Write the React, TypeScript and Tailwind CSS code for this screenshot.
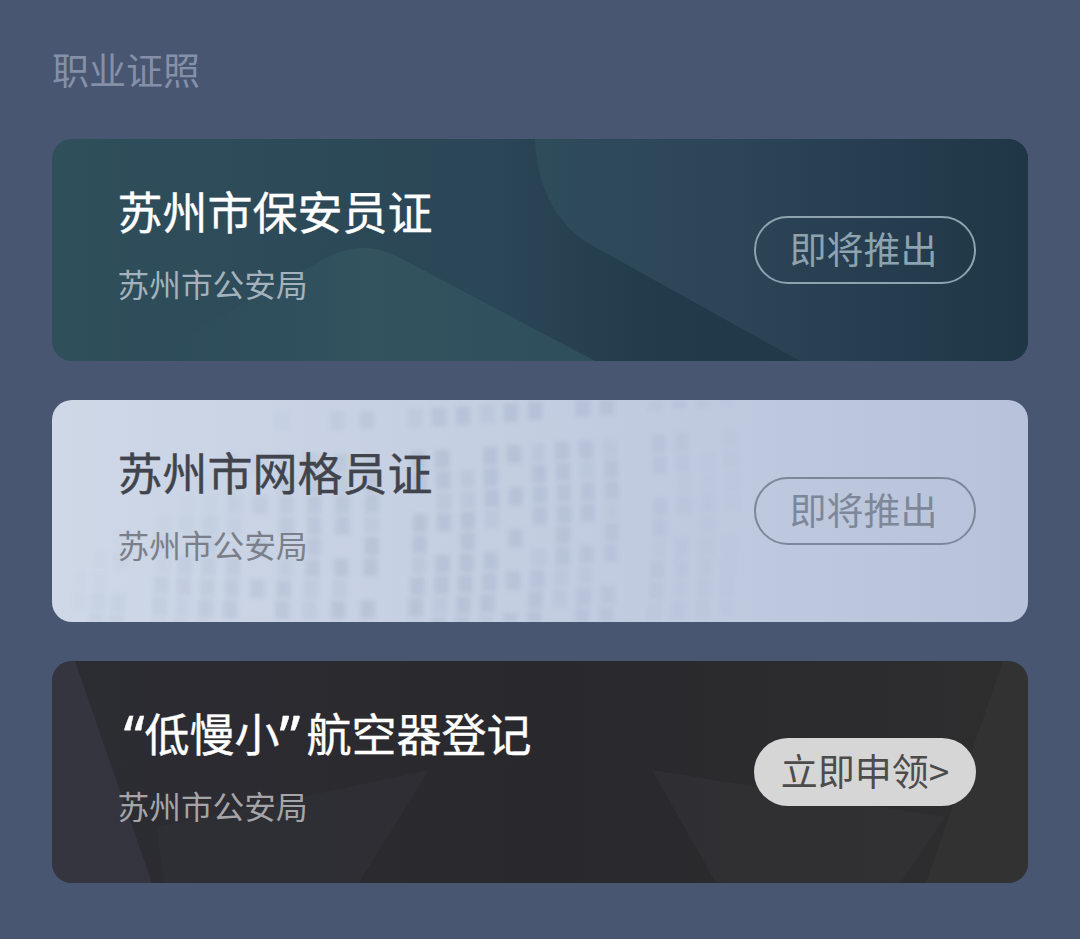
import type { ReactNode } from "react";

const font = { fontFamily: '"Noto Sans CJK SC", "Noto Sans", sans-serif' };

// faint window grid that bends like the building in the light card
function Windows() {
    const rects = [];
    for (let c = 0; c < 36; c++) {
        for (let r = 0; r < 11; r++) {
            const rowT = r / 10;
            const pitch = 24 - (c < 12 ? (12 - c) * 0.5 : 0);
            const x = 20 + c * pitch + Math.sin(r / 3) * 5;
            const y = 2 + r * 21 + Math.sin(c / 6) * 10 - (c > 22 ? (c - 22) * 0.8 : 0);
            const center = 450 - rowT * 130;
            const halfWidth = 250 + rowT * 130;
            const dx = (x - center) / halfWidth;
            const hash = (c * 37 + r * 61 + c * r * 13) % 10;
            if (hash < 2) continue;
            const alpha = 0.14 * Math.max(0, 1 - dx * dx) * (hash > 7 ? 0.55 : 1);
            if (alpha <= 0.01) continue;
            rects.push(<rect key={`${c}-${r}`} x={x} y={y} width={14} height={18} fill="#64789c" opacity={alpha} />);
        }
    }
    return <>{rects}</>;
}

function Deco({ children, className = "" }: { children: ReactNode; className?: string }) {
    return (
        <svg className={`absolute inset-0 w-full h-full pointer-events-none ${className}`} viewBox="0 0 976 222" preserveAspectRatio="none">
            {children}
        </svg>
    );
}

interface LicenseCardProps {
    title: ReactNode;
    bg: string;
    titleColor: string;
    subColor: string;
    deco: ReactNode;
    button: ReactNode;
}

function LicenseCard({ title, bg, titleColor, subColor, deco, button }: LicenseCardProps) {
    return (
        <div className={`relative h-[222px] rounded-[20px] overflow-hidden flex items-center justify-between pl-[65.5px] pr-[52px] ${bg}`}>
            {deco}
            <div className="relative flex flex-col -mt-[15px]">
                <div className={`h-[60px] text-[45px] leading-[60px] font-normal [-webkit-text-stroke:0.4px_currentColor] whitespace-nowrap ${titleColor}`}>{title}</div>
                <div className={`text-[31.7px] leading-[44px] mt-[20px] whitespace-nowrap ${subColor}`}>苏州市公安局</div>
            </div>
            <div className="relative">{button}</div>
        </div>
    );
}

function SoonButton({ className }: { className: string }) {
    return (
        <div className={`w-[222px] h-[68px] rounded-full border-[2.5px] flex items-center justify-center pr-[3px] pb-[3px] text-[37px] leading-none ${className}`}>
            即将推出
        </div>
    );
}

function Quote({ children, align }: { children: string; align: string }) {
    return <span className={`inline-block w-[27px] font-['Noto_Sans'] text-[58px] leading-none align-[-6px] ${align}`}>{children}</span>;
}

export default function App() {
    return (
        <div lang="zh-CN" className="w-[1080px] h-[939px] bg-[#485672] px-[52px] pt-[43px] overflow-hidden" style={font}>
            <div className="text-[37px] leading-[52px] text-[#8590a8]">职业证照</div>
            <div className="mt-[44px] flex flex-col gap-[39px]">
                <LicenseCard
                    title="苏州市保安员证"
                    bg="bg-[linear-gradient(90deg,#2f4f5b_0%,#2b4656_45%,#223b4b_62%,#1f3646_100%)]"
                    titleColor="text-white"
                    subColor="text-[#a3b2bd]"
                    deco={
                        <Deco>
                            <defs>
                                <linearGradient id="topShape" x1="0" y1="0" x2="1" y2="0">
                                    <stop offset="0" stopColor="#2f4c5b" />
                                    <stop offset="0.4" stopColor="#2c4557" />
                                    <stop offset="1" stopColor="#1f3646" />
                                </linearGradient>
                                <linearGradient id="mountain" x1="0" y1="0" x2="1" y2="0">
                                    <stop offset="0" stopColor="#305060" stopOpacity="0" />
                                    <stop offset="0.5" stopColor="#33535f" />
                                    <stop offset="1" stopColor="#2f4e5c" />
                                </linearGradient>
                            </defs>
                            <path d="M483 0 C485 50 505 85 536 104 L748 222 L976 222 L976 0 Z" fill="url(#topShape)" />
                            <path d="M88 222 L280 116 Q315 100 350 120 L543 222 Z" fill="url(#mountain)" />
                        </Deco>
                    }
                    button={<SoonButton className="border-[#8ea3b0] text-[#8ea3b0]" />}
                />
                <LicenseCard
                    title="苏州市网格员证"
                    bg="bg-gradient-to-r from-[#ced8e7] to-[#b8c3db]"
                    titleColor="text-[#41444c]"
                    subColor="text-[#7a7f89]"
                    deco={
                        <Deco className="blur-[2px]">
                            <Windows />
                        </Deco>
                    }
                    button={<SoonButton className="border-[#7d8799] text-[#7d8799]" />}
                />
                <LicenseCard
                    title={
                        <>
                            <Quote align="text-right">“</Quote>低慢小<Quote align="text-left">”</Quote>航空器登记
                        </>
                    }
                    bg="bg-gradient-to-r from-[#2c2c33] via-[#29292d] to-[#2e2e2f]"
                    titleColor="text-white"
                    subColor="text-[#a5a5a8]"
                    deco={
                        <Deco>
                            <path d="M0 0 L23 0 L100 222 L0 222 Z" fill="#383943" opacity="0.7" />
                            <path d="M112 222 L105 166 L377 109 L307 222 Z" fill="#32323a" opacity="0.5" />
                            <path d="M600 109 L893 156 L848 222 L664 222 Z" fill="#333337" opacity="0.6" />
                            <path d="M976 0 L951 0 L874 222 L976 222 Z" fill="#353535" opacity="0.7" />
                        </Deco>
                    }
                    button={
                        <div className="w-[222px] h-[68px] rounded-full bg-[#d6d6d6] flex items-center justify-center pb-[3px] text-[37px] leading-none text-[#4c4c4c]">
                            立即申领&gt;
                        </div>
                    }
                />
            </div>
        </div>
    );
}
